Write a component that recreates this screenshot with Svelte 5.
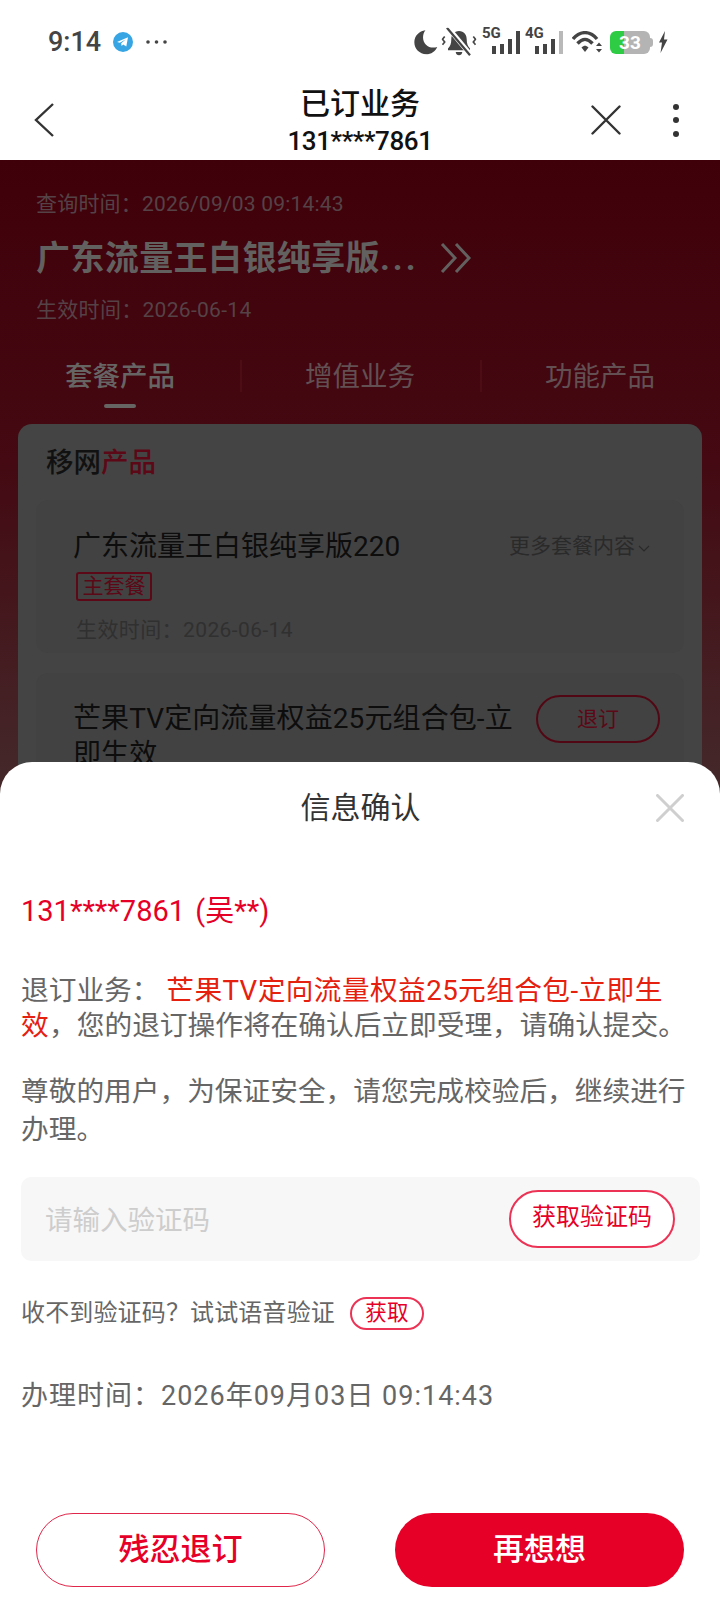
<script>
  const tabs = ["套餐产品", "增值业务", "功能产品"];
</script>

<div class="phone">
  <header class="top">
    <div class="status">
      <div class="status-left">
        <span class="clock">9:14</span>
        <svg class="tg" viewBox="0 0 20 20" width="20" height="20">
          <circle cx="10" cy="10" r="10" fill="#37a5e4" />
          <path d="M4 10 15 5.2 13.3 14.6 10.2 12.4 8.6 14 8.2 11.2 12.6 7.4 6.8 10.8Z" fill="#fff" />
        </svg>
        <svg class="more" viewBox="0 0 21 4" width="21" height="4">
          <circle cx="2" cy="2" r="1.8" fill="#444" />
          <circle cx="10.5" cy="2" r="1.8" fill="#444" />
          <circle cx="19" cy="2" r="1.8" fill="#444" />
        </svg>
      </div>
      <div class="status-right">
        <svg class="moon" viewBox="0 0 24 24" width="24" height="24">
          <path d="M11.5 1C5.5 1.6 1 6.4 1 12.3 1 18.500 6 23.500 12.200 23.500c4.600 0 8.700-2.800 10.400-6.900-1.200.5-2.500.7-3.800.7-5.300 0-9.600-4.300-9.600-9.600C9.200 5.200 10 2.900 11.500 1Z" fill="#444" />
        </svg>
        <svg class="bell" viewBox="0 0 32 26" width="32" height="26">
          <path d="M16 3c-4.500 0-7 3.500-7 7.500 0 4-1 6.500-3 8.500v1.500h20V19c-2-2-3-4.500-3-8.500C23 6.500 20.500 3 16 3ZM13 22h6c-.3 2-1.400 3-3 3s-2.700-1-3-3Z" fill="#444" />
          <path d="M6 0 26 24" stroke="#fff" stroke-width="4.500" />
          <path d="M5 0 26 25" stroke="#444" stroke-width="2" />
          <path d="M3 8 1 10.500 3 13 1 15.500M29 8 31 10.500 29 13 31 15.500" stroke="#444" stroke-width="1.500" fill="none" />
        </svg>
        <div class="signal">
          <span class="net">5G</span>
          <i class="bar h1"></i><i class="bar h2"></i><i class="bar h3"></i><i class="bar h4"></i>
        </div>
        <div class="signal">
          <span class="net">4G</span>
          <i class="bar h1"></i><i class="bar h2"></i><i class="bar h3"></i><i class="bar h4 off"></i>
        </div>
        <svg class="wifi" viewBox="0 0 30 22" width="30" height="22">
          <path d="M1 8C8-.5 18-.5 25 8M5.500 12.500c5-5.500 10-5.500 15 0" fill="none" stroke="#444" stroke-width="3.400" />
          <path d="M9.500 16.500c2.500-2.500 4.500-2.500 7 0L13 21Z" fill="#444" />
          <path d="M27 11.500 30 15H24ZM27 21.500 30 18H24Z" fill="#444" />
        </svg>
        <div class="battery">
          <div class="battery-body"><span>33</span></div>
          <i class="nub"></i>
        </div>
        <svg class="bolt" viewBox="0 0 10 22" width="10" height="22">
          <path d="M7 0 1 11.500H4L2.500 22 9.500 8.500H6Z" fill="#444" />
        </svg>
      </div>
    </div>
    <nav class="nav">
      <svg class="back" viewBox="0 0 20 34" width="20" height="34">
        <path d="M19 1 2 17 19 33" fill="none" stroke="#333" stroke-width="2.400" />
      </svg>
      <div class="nav-title">
        <div class="nav-name">已订业务</div>
        <div class="nav-num">131****7861</div>
      </div>
      <svg class="nav-x" viewBox="0 0 30 30" width="30" height="30">
        <path d="M1.500 1.500 28.500 28.500M28.500 1.500 1.500 28.500" stroke="#333" stroke-width="2.400" stroke-linecap="round" />
      </svg>
      <div class="kebab"><i></i><i></i><i></i></div>
    </nav>
  </header>

  <main class="dim">
    <section class="hero">
      <div class="hero-line">查询时间：2026/09/03 09:14:43</div>
      <div class="hero-title">
        <span>广东流量王白银纯享版<span class="dots">...</span></span>
        <svg viewBox="0 0 32 30" width="32" height="30">
          <path d="M2 1 15 15 2 29M16 1 29 15 16 29" fill="none" stroke="#636060" stroke-width="3" />
        </svg>
      </div>
      <div class="hero-line effect">生效时间：2026-06-14</div>
    </section>

    <div class="tabs">
      {#each tabs as tab, i}
        <div class="tab" class:active={i === 0}>
          <span class="tab-label">{tab}</span>
          <i class="tab-mark"></i>
        </div>
      {/each}
    </div>

    <section class="card">
      <h2 class="card-title">移网<em>产品</em></h2>
      <div class="item first">
        <div class="item-head">
          <div class="item-name">广东流量王白银纯享版220</div>
          <div class="item-more">
            更多套餐内容
            <svg viewBox="0 0 12 7" width="12" height="7">
              <path d="M1 1 6 6 11 1" fill="none" stroke="#2a2a2a" stroke-width="1.200" />
            </svg>
          </div>
        </div>
        <span class="tag">主套餐</span>
        <div class="item-date">生效时间：2026-06-14</div>
      </div>
      <div class="item second">
        <div class="item-head">
          <div class="item-name wrap">芒果TV定向流量权益25元组合包-立即生效</div>
          <span class="item-cancel">退订</span>
        </div>
      </div>
    </section>
  </main>

  <section class="sheet">
    <div class="sheet-head">
      <span></span>
      <h1>信息确认</h1>
      <svg class="sheet-x" viewBox="0 0 28 28" width="28" height="28">
        <path d="M1.500 1.500 26.500 26.500M26.500 1.500 1.500 26.500" stroke="#cfcfcf" stroke-width="3" stroke-linecap="round" />
      </svg>
    </div>
    <div class="phone-no">131****7861 (吴**)</div>
    <p class="para first-para">退订业务： <b>芒果TV定向流量权益25元组合包-立即生</b><b>效</b>，您的退订操作将在确认后立即受理，请确认提交。</p>
    <p class="para second-para">尊敬的用户，为保证安全，请您完成校验后，继续进行办理。</p>
    <div class="code-box">
      <span class="placeholder">请输入验证码</span>
      <span class="code-btn">获取验证码</span>
    </div>
    <div class="voice">
      <span>收不到验证码？试试语音验证</span>
      <span class="voice-btn">获取</span>
    </div>
    <div class="when">办理时间：2026年09月03日 09:14:43</div>
    <div class="actions">
      <div class="btn ghost">残忍退订</div>
      <div class="btn solid">再想想</div>
    </div>
  </section>
</div>

<style>
  :global(body) {
    margin: 0;
    background: #fff;
  }
  .phone {
    position: relative;
    width: 720px;
    height: 1600px;
    overflow: hidden;
    font-family: Roboto, "Noto Sans CJK SC", sans-serif;
    background: #fff;
  }
  .top {
    height: 160px;
    background: #fff;
  }
  .status {
    height: 84px;
    display: flex;
    justify-content: space-between;
    align-items: center;
    padding: 0 52px 0 48px;
    box-sizing: border-box;
  }
  .status-left {
    display: flex;
    align-items: center;
  }
  .clock {
    font-size: 27px;
    font-weight: 500;
    color: #444;
    line-height: 30px;
  }
  .tg {
    margin-left: 12px;
  }
  .more {
    margin-left: 13px;
  }
  .status-right {
    display: flex;
    align-items: center;
  }
  .moon {
    transform: scale(1.06);
  }
  .bell {
    margin-left: 5px;
    margin-right: 2px;
    transform: scale(1.1);
  }
  .signal {
    position: relative;
    width: 38px;
    height: 24px;
    margin-left: 5px;
    display: flex;
    justify-content: flex-end;
    align-items: flex-end;
    gap: 3.500px;
  }
  .net {
    position: absolute;
    left: 0;
    top: -4px;
    font-size: 15px;
    font-weight: 700;
    line-height: 14px;
    color: #444;
  }
  .bar {
    width: 4.500px;
    background: #444;
  }
  .h1 { height: 8px; }
  .h2 { height: 10px; }
  .h3 { height: 15px; }
  .h4 { height: 23px; }
  .off { background: #b9b9b9; }
  .wifi {
    margin-left: 9px;
  }
  .battery {
    display: flex;
    align-items: center;
    margin-left: 8px;
  }
  .battery-body {
    width: 40px;
    height: 23px;
    border-radius: 6px;
    background: linear-gradient(90deg, #2ecb45 0 14px, #b4b4b4 14px);
    display: flex;
    align-items: center;
    justify-content: center;
    color: #fff;
    font-size: 19px;
    font-weight: 700;
  }
  .nub {
    width: 3px;
    height: 9px;
    border-radius: 0 3px 3px 0;
    background: #b4b4b4;
  }
  .bolt {
    margin-left: 5px;
  }
  .nav {
    height: 76px;
    display: flex;
    align-items: center;
    position: relative;
    padding: 0 0 0 34px;
  }
  .back {
    margin-top: -4px;
  }
  .nav-title {
    position: absolute;
    left: 0;
    right: 0;
    top: 0;
    text-align: center;
    color: #111;
  }
  .nav-name {
    font-size: 30px;
    font-weight: 500;
    line-height: 40px;
  }
  .nav-num {
    font-size: 26px;
    font-weight: 500;
    line-height: 35px;
    letter-spacing: -0.4px;
  }
  .nav-x {
    margin-left: auto;
    margin-top: -4px;
  }
  .kebab {
    display: flex;
    flex-direction: column;
    gap: 7.500px;
    margin: -4px 41px 0 52px;
  }
  .kebab i {
    width: 6px;
    height: 6px;
    border-radius: 50%;
    background: #333;
  }
  .dim {
    height: 1440px;
    background: linear-gradient(180deg, #40000a 0, #440912 300px, #442729 610px);
  }
  .hero {
    padding: 30px 0 0 36px;
  }
  .hero-line {
    font-size: 21px;
    letter-spacing: 0.2px;
    line-height: 28px;
    color: #554246;
  }
  .hero-title {
    display: flex;
    align-items: center;
    gap: 21px;
    margin-top: 16px;
    font-size: 34px;
    font-weight: 700;
    letter-spacing: 0.4px;
    line-height: 48px;
    color: #636060;
  }
  .dots {
    letter-spacing: 3px;
  }
  .effect {
    margin-top: 14px;
    letter-spacing: 0.3px;
  }
  .tabs {
    display: grid;
    grid-template-columns: repeat(3, 240px);
    margin-top: 32px;
  }
  .tab {
    position: relative;
    display: flex;
    flex-direction: column;
    align-items: center;
    gap: 8px;
    font-size: 27.500px;
    line-height: 40px;
    color: #625053;
  }
  .tab-label {
    padding-top: 1px;
    margin-bottom: -1px;
  }
  .tab.active {
    color: #676464;
    font-weight: 500;
  }
  .tab + .tab::before {
    content: "";
    position: absolute;
    left: 0;
    top: 4px;
    width: 2px;
    height: 32px;
    background: #4c0d15;
  }
  .tab-mark {
    width: 32px;
    height: 4px;
    border-radius: 2px;
    background: transparent;
  }
  .active .tab-mark {
    background: #676464;
  }
  .card {
    margin: 16px 18px 0;
    padding: 21px 18px 40px;
    height: 400px;
    background: #444;
    border-radius: 14px;
  }
  .card-title {
    margin: 0 0 0 10px;
    font-size: 27.500px;
    font-weight: 500;
    line-height: 36px;
    color: #111;
  }
  .card-title em {
    font-style: normal;
    color: #5c0816;
  }
  .item {
    border-radius: 12px;
    background: #424242;
    padding-left: 37px;
    padding-right: 24px;
  }
  .first {
    margin-top: 19px;
    padding-top: 29px;
    padding-bottom: 9px;
  }
  .second {
    margin-top: 20px;
    padding-top: 28px;
    height: 100px;
  }
  .item-head {
    display: flex;
    justify-content: space-between;
    align-items: flex-start;
  }
  .item-name {
    font-size: 28px;
    line-height: 36px;
    color: #0d0d0d;
  }
  .wrap {
    width: 445px;
    letter-spacing: 0.1px;
  }
  .item-more {
    display: flex;
    align-items: center;
    gap: 3px;
    margin: -1px 10px 0 0;
    font-size: 21px;
    line-height: 36px;
    color: #2a2a2a;
  }
  .item-more svg {
    margin-top: 4px;
  }
  .tag {
    display: block;
    width: 76px;
    height: 29px;
    margin: 7px 0 0 3px;
    box-sizing: border-box;
    border: 2px solid #5c0816;
    border-radius: 3px;
    text-align: center;
    font-size: 21px;
    line-height: 25px;
    color: #5c0816;
  }
  .item-date {
    margin: 15px 0 0 3px;
    font-size: 21px;
    letter-spacing: 0.4px;
    line-height: 28px;
    color: #303030;
  }
  .item-cancel {
    width: 124px;
    height: 48px;
    margin-top: -6px;
    box-sizing: border-box;
    border: 2px solid #520814;
    border-radius: 24px;
    text-align: center;
    font-size: 21px;
    line-height: 44px;
    color: #5c0816;
  }
  .sheet {
    position: absolute;
    left: 0;
    right: 0;
    top: 762px;
    bottom: 0;
    padding: 26px 20px 0 21px;
    background: #fff;
    border-radius: 32px 32px 0 0;
    color: #666;
  }
  .sheet-head {
    display: grid;
    grid-template-columns: 1fr auto 1fr;
    align-items: center;
  }
  .sheet-head h1 {
    margin: 0;
    font-size: 30px;
    font-weight: 400;
    line-height: 40px;
    color: #333;
  }
  .sheet-x {
    justify-self: end;
    margin-right: 16px;
  }
  .phone-no {
    margin-top: 63px;
    font-size: 29px;
    word-spacing: 3px;
    line-height: 40px;
    color: #e60027;
  }
  .para {
    margin: 0;
    font-size: 27.700px;
  }
  .para b {
    font-weight: 400;
    letter-spacing: 0.4px;
    color: #e5200f;
  }
  .first-para {
    margin-top: 42px;
    line-height: 35px;
  }
  .second-para {
    margin-top: 30px;
    line-height: 38px;
  }
  .code-box {
    display: flex;
    justify-content: space-between;
    align-items: center;
    height: 84px;
    margin-top: 28px;
    padding: 0 25px 0 24px;
    background: #f7f7f7;
    border-radius: 10px;
  }
  .placeholder {
    margin-top: -3px;
    font-size: 27.500px;
    color: #cdcdcd;
  }
  .code-btn {
    width: 166px;
    height: 58px;
    box-sizing: border-box;
    border: 2px solid #ec3355;
    border-radius: 29px;
    background: #fff;
    text-align: center;
    font-size: 24px;
    line-height: 51px;
    color: #e60027;
  }
  .voice {
    display: flex;
    align-items: center;
    gap: 15px;
    margin-top: 36px;
    font-size: 24px;
    letter-spacing: 0.15px;
    line-height: 33px;
  }
  .voice-btn {
    width: 74px;
    height: 33px;
    box-sizing: border-box;
    border: 2px solid #ec3355;
    border-radius: 17px;
    text-align: center;
    font-size: 21.500px;
    line-height: 28px;
    color: #e60027;
  }
  .when {
    margin-top: 46px;
    font-size: 27px;
    letter-spacing: 1px;
    line-height: 40px;
  }
  .actions {
    display: flex;
    gap: 70px;
    margin: 97px 0 0 15px;
  }
  .btn {
    width: 289px;
    height: 74px;
    box-sizing: border-box;
    border-radius: 37px;
    text-align: center;
    font-size: 31px;
    font-weight: 500;
    line-height: 72px;
  }
  .ghost {
    border: 1.500px solid #e0264a;
    color: #e60027;
  }
  .solid {
    background: #e60027;
    color: #fff;
    line-height: 74px;
  }
</style>
